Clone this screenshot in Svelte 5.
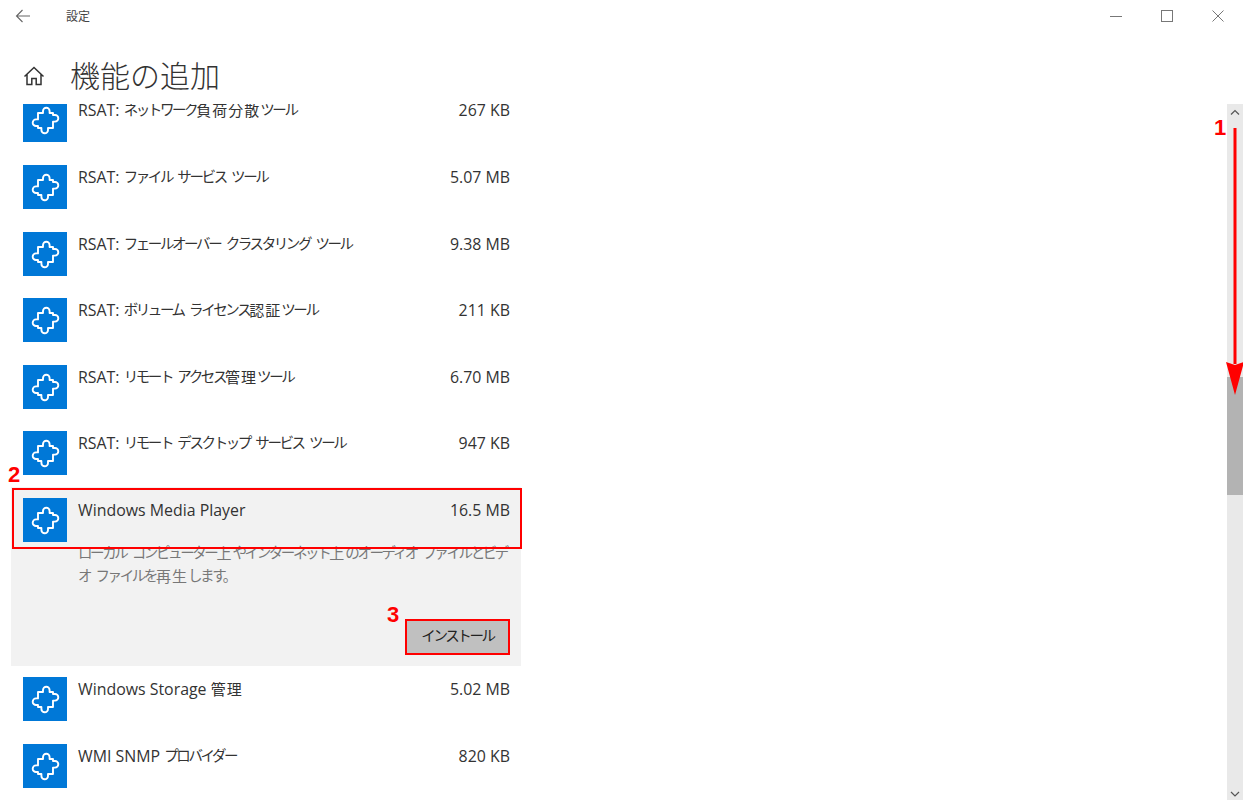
<script>
  const before = [
    { latin: 'RSAT: ', jp: 'ネットワーク負荷分散ツール', size: '267 KB' },
    { latin: 'RSAT: ', jp: 'ファイル サービス ツール', size: '5.07 MB' },
    { latin: 'RSAT: ', jp: 'フェールオーバー クラスタリング ツール', size: '9.38 MB' },
    { latin: 'RSAT: ', jp: 'ボリューム ライセンス認証ツール', size: '211 KB' },
    { latin: 'RSAT: ', jp: 'リモート アクセス管理ツール', size: '6.70 MB' },
    { latin: 'RSAT: ', jp: 'リモート デスクトップ サービス ツール', size: '947 KB' }
  ];
  const after = [
    { latin: 'Windows Storage ', jp: '管理', size: '5.02 MB' },
    { latin: 'WMI SNMP ', jp: 'プロバイダー', size: '820 KB' }
  ];

  // the original UI font has condensed kana next to full-width kanji
  function runs(text) {
    return text.split(/([\u4e00-\u9fff]+)/).filter(Boolean).map((part) => ({
      part,
      kanji: /[\u4e00-\u9fff]/.test(part)
    }));
  }
</script>

{#snippet jp(text)}
  {#each runs(text) as run}<span class={run.kanji ? 'kanji' : 'kana'}>{run.part}</span>{/each}
{/snippet}

{#snippet puzzle()}
  <div class="tile">
    <svg width="44" height="44" viewBox="0 0 44 44" fill="none" stroke="#fff" stroke-width="1.9" stroke-linejoin="round">
      <path d="M15 15h5v-2a3.300 3.300 0 0 1 6.600 0v2H30v2h2a3.300 3.300 0 0 1 0 6.600h-2V30h-5v2a3.300 3.300 0 0 1-6.600 0v-2H15v-2h-2a3.300 3.300 0 0 1 0-6.600h2z" />
    </svg>
  </div>
{/snippet}

{#snippet row(item)}
  <div class="row">
    {@render puzzle()}
    <span class="name">{item.latin}{@render jp(item.jp)}</span>
    <span class="size">{item.size}</span>
  </div>
{/snippet}

<div class="window">
  <header class="titlebar">
    <svg class="back" width="16" height="14" viewBox="0 0 16 14" fill="none" stroke="#666" stroke-width="1.1">
      <path d="M15 7H1.500M7.500 1L1.500 7l6 6" />
    </svg>
    <span class="app-name">設定</span>
    <div class="controls">
      <svg width="12" height="12" viewBox="0 0 12 12" fill="none" stroke="#777" stroke-width="1"><path d="M0 6.500h12" /></svg>
      <svg width="12" height="12" viewBox="0 0 12 12" fill="none" stroke="#777" stroke-width="1"><rect x="0.500" y="0.500" width="11" height="11" /></svg>
      <svg width="12" height="12" viewBox="0 0 12 12" fill="none" stroke="#777" stroke-width="1"><path d="M.5.500l11 11M11.500.500l-11 11" /></svg>
    </div>
  </header>

  <div class="heading">
    <svg width="22" height="20" viewBox="0 0 22 20" fill="none" stroke="#333" stroke-width="1.500">
      <path d="M1.500 10.500L11 1.500l9.500 9M4 8.500V18.500h4.800v-6h4.400v6H18V8.500" />
    </svg>
    <h1>機能の追加</h1>
  </div>

  <div class="body">
    <div class="list">
      <div class="scrolled">
        {#each before as item}
          {@render row(item)}
        {/each}

        <div class="expanded">
          {@render row({ latin: 'Windows Media Player', jp: '', size: '16.5 MB' })}
          <p class="desc">
            {@render jp('ローカル コンピューター上やインターネット上のオーディオ ファイルとビデ')}<br />{@render jp('オ ファイルを再生します。')}
          </p>
          <div class="actions">
            <button>{@render jp('インストール')}</button>
          </div>
        </div>

        {#each after as item}
          {@render row(item)}
        {/each}
      </div>
    </div>

    <div class="scrollbar">
      <svg class="up" width="16" height="16" viewBox="0 0 16 16" fill="none" stroke="#555" stroke-width="1.200"><path d="M4 10.500l4-4 4 4" /></svg>
      <div class="thumb"></div>
      <svg class="down" width="16" height="16" viewBox="0 0 16 16" fill="none" stroke="#555" stroke-width="1.200"><path d="M4 6l4 4 4-4" /></svg>
    </div>
  </div>

  <!-- annotations drawn over the screenshot -->
  <div class="mark box-row"></div>
  <div class="mark box-btn"></div>
  <span class="num n1">1</span>
  <span class="num n2">2</span>
  <span class="num n3">3</span>
  <svg class="arrow" width="20" height="270" viewBox="0 0 20 270">
    <path d="M8.500 0h3v236h-3z" fill="#f00" />
    <path d="M1 234l9 3 9-3-9 33z" fill="#f00" />
  </svg>
</div>

<style>
  :global(body) {
    margin: 0;
    background: #fff;
  }

  .window {
    position: relative;
    width: 1243px;
    height: 800px;
    overflow: hidden;
    display: flex;
    flex-direction: column;
    font-family: "Open Sans", "Noto Sans CJK JP", sans-serif;
    color: #333;
  }

  .titlebar {
    height: 31px;
    display: flex;
    align-items: center;
    flex: none;
  }

  .back {
    margin-left: 15px;
  }

  .app-name {
    margin-left: 35px;
    font-size: 12px;
    color: #444;
  }

  .controls {
    margin-left: auto;
    margin-right: 19px;
    display: flex;
    gap: 39px;
  }

  .heading {
    height: 73px;
    flex: none;
    box-sizing: border-box;
    padding: 13px 0 0 23px;
    display: flex;
    align-items: center;
    gap: 25px;
  }

  .heading svg {
    margin-top: 3px;
  }

  h1 {
    margin: 0;
    font-size: 30px;
    font-weight: 300;
    line-height: 40px;
    color: #333;
    font-family: "Noto Sans CJK JP", sans-serif;
  }

  .body {
    flex: 1;
    min-height: 0;
    display: flex;
  }

  .list {
    width: 510px;
    margin-left: 11px;
    overflow: hidden;
  }

  .scrolled {
    margin-top: -16.600px;
  }

  .row {
    height: 66.600px;
    box-sizing: border-box;
    padding: 11px 11px 0 12px;
    display: flex;
    align-items: flex-start;
    font-size: 15.900px;
    line-height: 24px;
    white-space: pre;
  }

  .kana,
  .kanji {
    font-family: "Noto Sans CJK JP", sans-serif;
    line-height: 20px;
  }

  .kana {
    font-size: 14.500px;
    letter-spacing: -2.400px;
    word-spacing: 4.500px;
    vertical-align: 1px;
  }

  .kanji {
    font-size: 15px;
    letter-spacing: 1px;
  }

  .tile {
    width: 44px;
    height: 44px;
    flex: none;
    background: #0078d7;
  }

  .tile svg {
    display: block;
  }

  .name {
    margin-left: 11px;
  }

  .size {
    margin-left: auto;
  }

  .expanded {
    height: 179px;
    background: #f2f2f2;
  }

  .expanded .row {
    height: 55px;
  }

  .desc {
    margin: 0 0 0 67px;
    font-family: "Noto Sans CJK JP", sans-serif;
    font-size: 14px;
    line-height: 23px;
    color: #777;
    white-space: nowrap;
  }

  .actions {
    display: flex;
    justify-content: flex-end;
    padding: 31px 11px 0 0;
  }

  button {
    width: 105px;
    height: 36px;
    border: 0;
    padding: 0 0 3px;
    background: #c0c0c0;
    font-family: "Noto Sans CJK JP", sans-serif;
    font-size: 14px;
    line-height: 20px;
    color: #222;
  }

  .scrollbar {
    margin-left: auto;
    width: 16px;
    background: #e9e9e9;
    display: flex;
    flex-direction: column;
    align-items: center;
  }

  .up {
    margin-bottom: 257px;
  }

  .thumb {
    align-self: stretch;
    height: 118px;
    background: #b3b3b3;
  }

  .down {
    margin-top: auto;
    margin-bottom: -2px;
  }

  .mark {
    position: absolute;
    box-sizing: border-box;
    border: 2px solid #f00;
  }

  .box-row {
    left: 12px;
    top: 488px;
    width: 510px;
    height: 61px;
  }

  .box-btn {
    left: 405px;
    top: 619px;
    width: 105px;
    height: 36px;
  }

  .num {
    position: absolute;
    font-family: "Liberation Sans", sans-serif;
    font-weight: 700;
    font-size: 22px;
    line-height: 22px;
    color: #f00;
  }

  .n1 { left: 1214px; top: 117px; }
  .n2 { left: 8px; top: 464px; }
  .n3 { left: 387px; top: 604px; }

  .arrow {
    position: absolute;
    left: 1225px;
    top: 128px;
  }
</style>
